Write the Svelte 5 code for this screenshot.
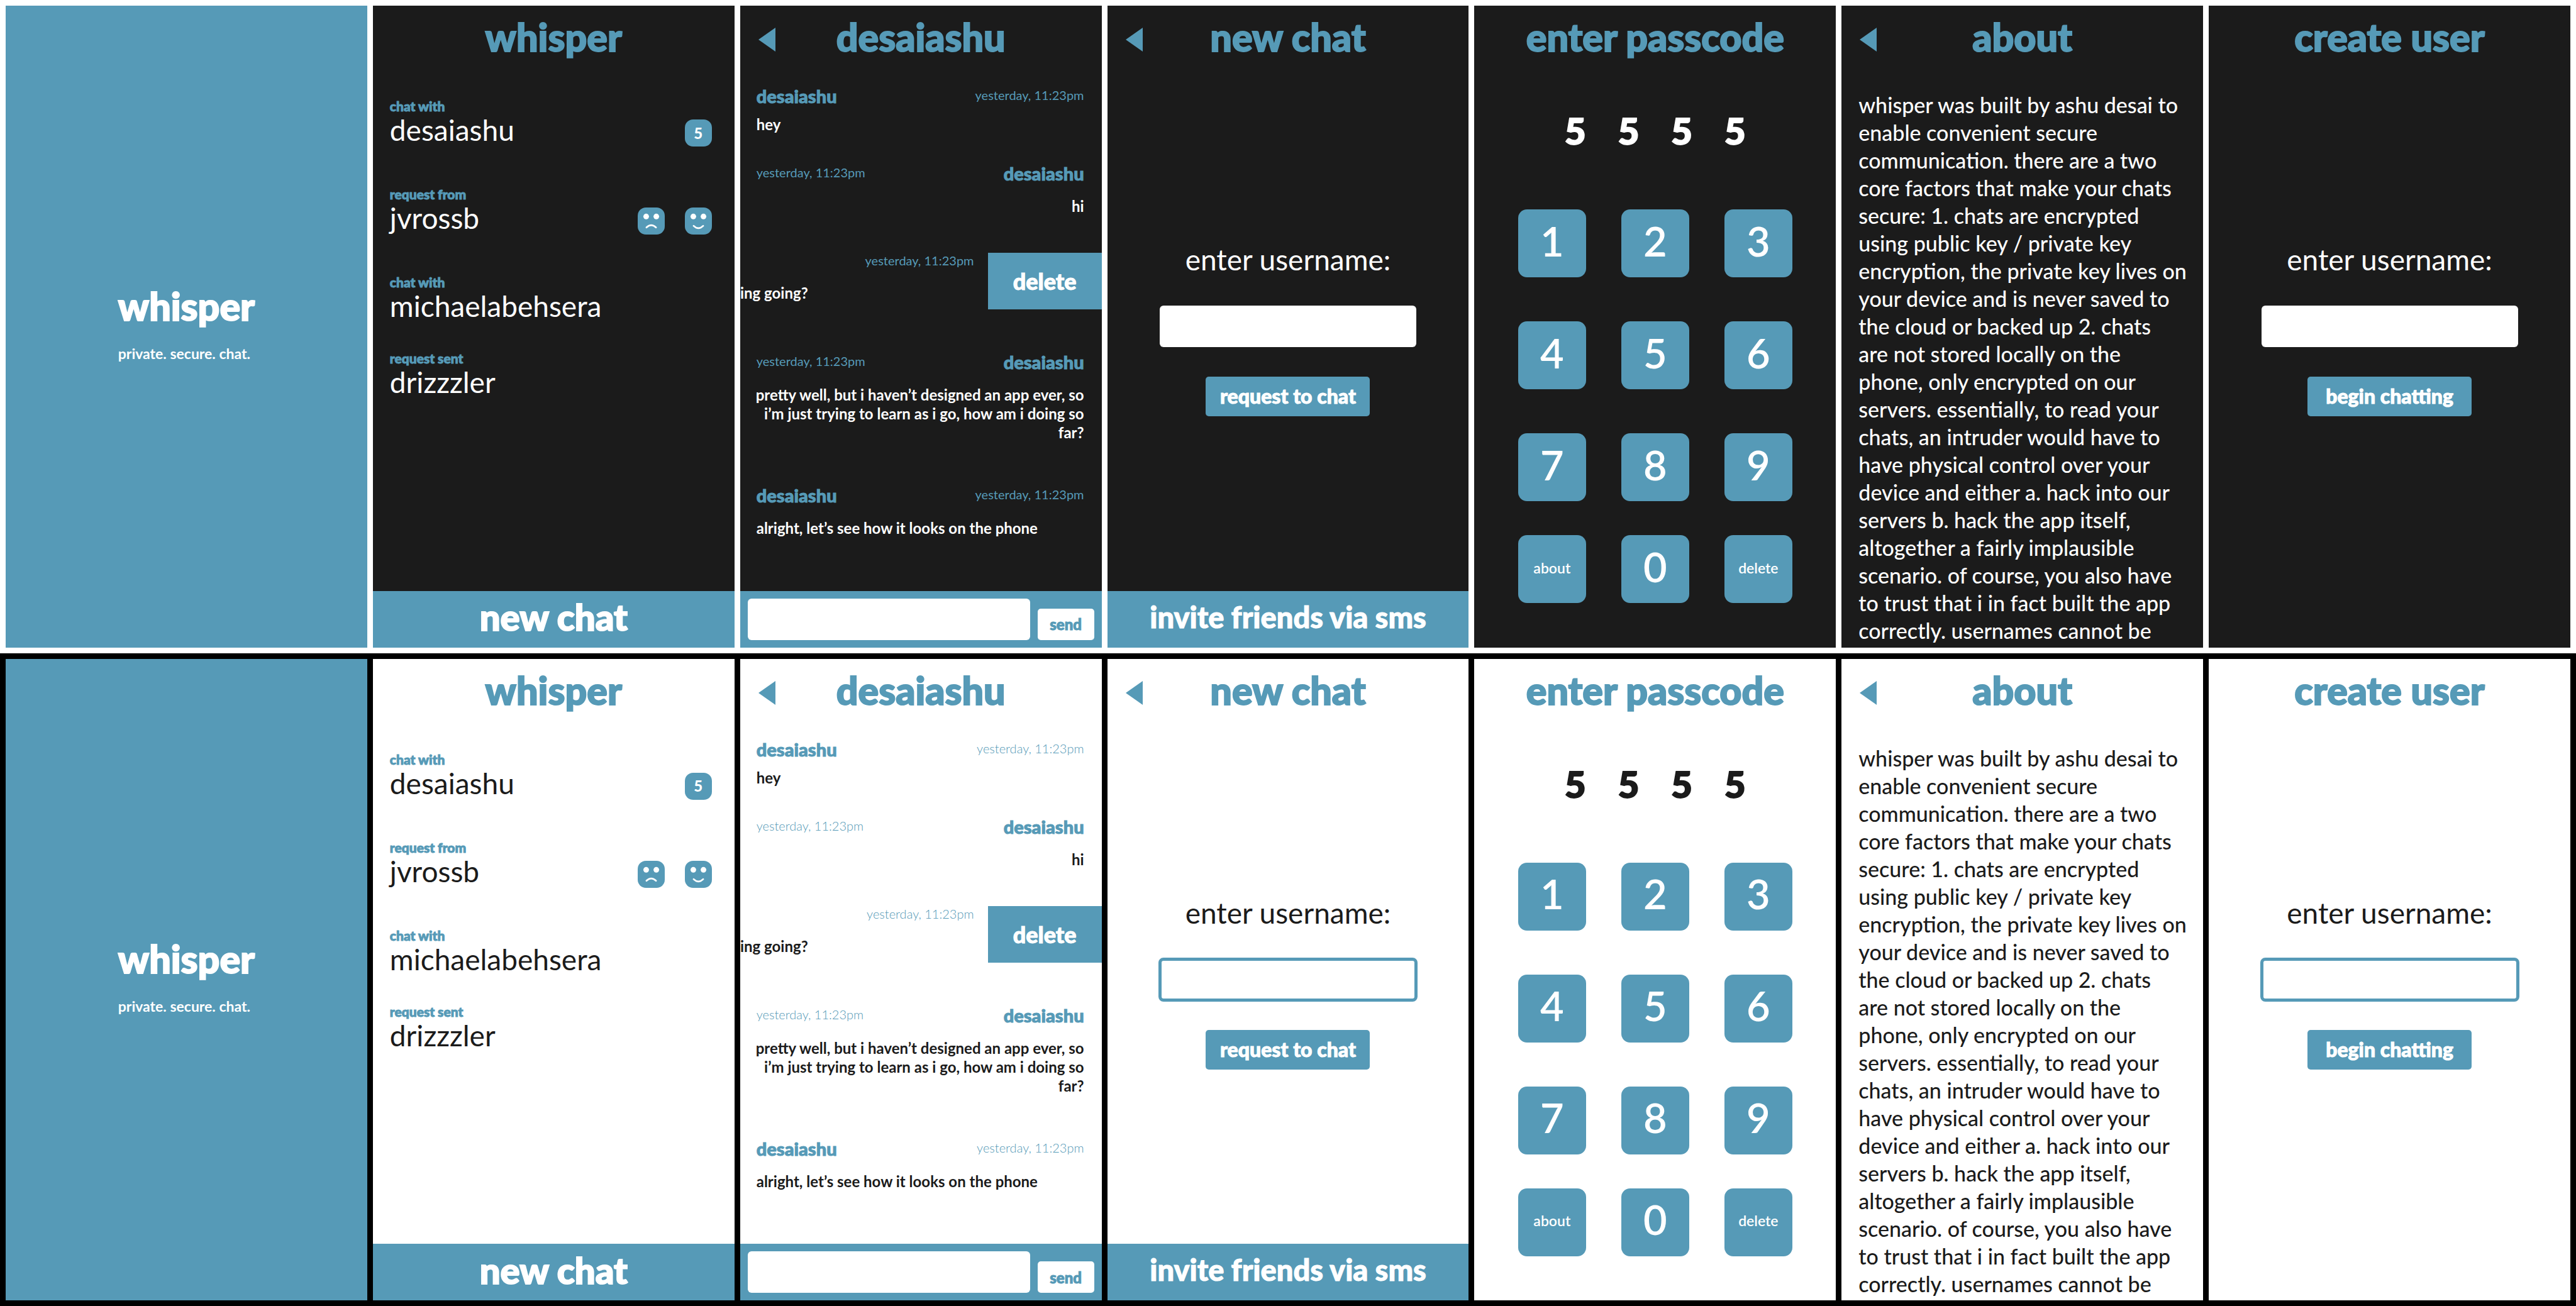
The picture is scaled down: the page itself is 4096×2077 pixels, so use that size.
<script>
  const themes = ['dark', 'light'];

  const chats = [
    { label: 'chat with', name: 'desaiashu', unread: 5 },
    { label: 'request from', name: 'jvrossb', request: true },
    { label: 'chat with', name: 'michaelabehsera' },
    { label: 'request sent', name: 'drizzzler' }
  ];

  const sent = 'yesterday, 11:23pm';

  const keys = ['1', '2', '3', '4', '5', '6', '7', '8', '9', 'about', '0', 'delete'];

  const about = [
    'whisper was built by ashu desai to',
    'enable convenient secure',
    'communication. there are a two',
    'core factors that make your chats',
    'secure: 1. chats are encrypted',
    'using public key / private key',
    'encryption, the private key lives on',
    'your device and is never saved to',
    'the cloud or backed up 2. chats',
    'are not stored locally on the',
    'phone, only encrypted on our',
    'servers. essentially, to read your',
    'chats, an intruder would have to',
    'have physical control over your',
    'device and either a. hack into our',
    'servers b. hack the app itself,',
    'altogether a fairly implausible',
    'scenario. of course, you also have',
    'to trust that i in fact built the app',
    'correctly. usernames cannot be'
  ].join('\n');
</script>

{#snippet header(title, back)}
  <header class="header">
    {#if back}
      <button class="back" aria-label="back">
        <svg viewBox="0 0 27 38" width="27" height="38"><path d="M0 19 27 0V38Z" fill="currentColor" /></svg>
      </button>
    {/if}
    <h2 class="title">{title}</h2>
  </header>
{/snippet}

{#snippet face(happy)}
  <button class="badge" aria-label={happy ? 'accept' : 'decline'}>
    <svg viewBox="0 0 48 48" width="43" height="43" fill="none" stroke="#fff" stroke-width="3" stroke-linecap="round">
      <circle cx="15" cy="16" r="5" fill="#fff" stroke="none" />
      <circle cx="33" cy="16" r="5" fill="#fff" stroke="none" />
      {#if happy}
        <path d="M15.5 32.5Q24 41 32.5 32.5" />
      {:else}
        <path d="M15.5 35.5Q24 27 32.5 35.5" />
      {/if}
    </svg>
  </button>
{/snippet}

{#snippet message(mine, text, spacing)}
  <article class="message {spacing}" class:mine>
    <div class="meta">
      <span class="author">desaiashu</span>
      <time class="time">{sent}</time>
    </div>
    <p class="body">{text}</p>
  </article>
{/snippet}

{#snippet usernameForm(id, action)}
  <form class="form" onsubmit={(e) => e.preventDefault()}>
    <label class="prompt" for={id}>enter username:</label>
    <input class="field" {id} type="text" />
    <button class="submit">{action}</button>
  </form>
{/snippet}

<main class="board">
  {#each themes as theme}
    <section class="row {theme}">
      <div class="screen splash">
        <div class="brand">
          <h1 class="logo">whisper</h1>
          <p class="tagline">private. secure. chat.</p>
        </div>
      </div>

      <div class="screen">
        {@render header('whisper', false)}
        <ul class="chats">
          {#each chats as chat}
            <li class="chat" class:active={chat.unread || chat.request}>
              <span class="label">{chat.label}</span>
              <div class="line">
                <span class="name">{chat.name}</span>
                {#if chat.unread}<span class="badge count">{chat.unread}</span>{/if}
                {#if chat.request}
                  {@render face(false)}
                  {@render face(true)}
                {/if}
              </div>
            </li>
          {/each}
        </ul>
        <button class="bar big">new chat</button>
      </div>

      <div class="screen">
        {@render header('desaiashu', true)}
        <div class="thread">
          {@render message(false, 'hey', 'tight')}
          {@render message(true, 'hi', 'medium')}
          <article class="swiped">
            <div class="slid">
              <time class="time">{sent}</time>
              <p class="body cut">ing going?</p>
            </div>
            <button class="remove">delete</button>
          </article>
          {@render message(true, 'pretty well, but i haven’t designed an app ever, so\ni’m just trying to learn as i go, how am i doing so\nfar?', 'loose')}
          {@render message(false, 'alright, let’s see how it looks on the phone', 'last')}
        </div>
        <form class="bar compose" onsubmit={(e) => e.preventDefault()}>
          <input class="draft" type="text" aria-label="message" />
          <button class="send">send</button>
        </form>
      </div>

      <div class="screen">
        {@render header('new chat', true)}
        {@render usernameForm(`invite-${theme}`, 'request to chat')}
        <button class="bar">invite friends via sms</button>
      </div>

      <div class="screen">
        {@render header('enter passcode', false)}
        <output class="code">
          {#each [5, 5, 5, 5] as digit}<span>{digit}</span>{/each}
        </output>
        <div class="pad">
          {#each keys as key}
            <button class="key" class:word={key.length > 1}>{key}</button>
          {/each}
        </div>
      </div>

      <div class="screen">
        {@render header('about', true)}
        <p class="about">{about}</p>
      </div>

      <div class="screen">
        {@render header('create user', false)}
        {@render usernameForm(`create-${theme}`, 'begin chatting')}
      </div>
    </section>
  {/each}
</main>

<style>
  :global(body) {
    margin: 0;
  }

  .board {
    --blue: #569ab7;
    display: grid;
    grid-auto-rows: 1fr;
    min-height: 100vh;
    font-family: Lato, 'Open Sans', sans-serif;
  }

  .board *,
  .board {
    box-sizing: border-box;
  }

  h1,
  h2,
  p,
  ul {
    margin: 0;
    padding: 0;
  }

  button,
  input {
    margin: 0;
    padding: 0;
    border: 0;
    font: inherit;
    color: inherit;
    background: none;
  }

  .row {
    display: grid;
    grid-template-columns: repeat(7, minmax(0, 1fr));
    gap: 9px;
    padding: 9px;
  }

  .dark {
    --page: #1b1b1b;
    --ink: #fff;
    --time-weight: 400;
    background: #fff;
  }

  .light {
    --page: #fff;
    --ink: #1b1b1b;
    --time-weight: 300;
    background: #000;
  }

  .screen {
    display: flex;
    flex-direction: column;
    overflow: hidden;
    background: var(--page);
    color: var(--ink);
  }

  .splash {
    align-items: center;
    justify-content: center;
    background: var(--blue);
    color: #fff;
  }

  .brand {
    padding-bottom: 20px;
  }

  .logo,
  .title {
    font-size: 61px;
    line-height: 92px;
    font-weight: 900;
    -webkit-text-stroke: 2px;
  }

  .tagline {
    font-size: 23px;
    line-height: 32px;
    font-weight: 700;
    padding-top: 13px;
  }

  .header {
    display: grid;
    grid-template-columns: 60px 1fr 60px;
    align-items: center;
    height: 92px;
    flex: none;
    color: var(--blue);
  }

  .back {
    display: flex;
    grid-row: 1;
    grid-column: 1;
    justify-content: flex-end;
    padding: 12px 4px 0 0;
  }

  .title {
    grid-row: 1;
    grid-column: 2;
    padding-top: 4px;
    text-align: center;
    white-space: nowrap;
  }

  .chats {
    display: flex;
    flex-direction: column;
    flex: 1;
    gap: 45px;
    padding: 56px 36px 0 27px;
    list-style: none;
  }

  .active {
    padding-bottom: 19px;
  }

  .label {
    display: block;
    font-size: 21px;
    line-height: 24px;
    font-weight: 900;
    -webkit-text-stroke: 1px;
    color: var(--blue);
  }

  .line {
    display: flex;
    align-items: flex-end;
    gap: 32px;
  }

  .name {
    flex: 1;
    font-size: 46px;
    line-height: 52px;
  }

  .badge {
    display: flex;
    align-items: center;
    justify-content: center;
    width: 43px;
    height: 43px;
    border-radius: 13px;
    background: var(--blue);
    color: #fff;
  }

  .count {
    font-size: 24px;
    line-height: 32px;
    font-weight: 900;
  }

  .bar {
    flex: none;
    height: 90px;
    padding-bottom: 8px;
    background: var(--blue);
    color: #fff;
    font-size: 47px;
    font-weight: 900;
    -webkit-text-stroke: 1px;
  }

  .big {
    font-size: 58px;
    -webkit-text-stroke: 2px;
  }

  .thread {
    flex: 1;
    padding-top: 38px;
  }

  .message {
    display: flex;
    flex-direction: column;
    gap: 23px;
    padding: 0 28px 0 26px;
  }

  .tight {
    gap: 16px;
    padding-bottom: 49px;
  }

  .medium {
    padding-bottom: 59px;
  }

  .loose {
    padding-bottom: 71px;
  }

  .meta {
    display: flex;
    justify-content: space-between;
  }

  .mine .meta {
    flex-direction: row-reverse;
  }

  .author {
    font-size: 29px;
    line-height: 28px;
    font-weight: 900;
    -webkit-text-stroke: 1px;
    color: var(--blue);
  }

  .time {
    font-size: 20px;
    line-height: 24px;
    font-weight: var(--time-weight);
    color: var(--blue);
  }

  .body {
    font-size: 24px;
    line-height: 30px;
    font-weight: 700;
    white-space: pre;
  }

  .mine .body {
    align-self: flex-end;
    text-align: right;
  }

  .swiped {
    display: flex;
    height: 90px;
    margin-bottom: 70px;
  }

  .slid {
    display: flex;
    flex: 1;
    flex-direction: column;
    align-items: flex-end;
    gap: 25px;
    padding-right: 22px;
  }

  .cut {
    display: flex;
    align-self: flex-start;
    justify-content: flex-end;
    width: 108px;
  }

  .remove {
    width: 181px;
    background: var(--blue);
    color: #fff;
    font-size: 36px;
    font-weight: 900;
    -webkit-text-stroke: 1px;
  }

  .compose {
    display: flex;
    align-items: flex-end;
    gap: 12px;
    padding: 12px;
  }

  .draft {
    flex: 1;
    min-width: 0;
    height: 66px;
    padding: 0 16px;
    border-radius: 6px;
    background: #fff;
    color: #1b1b1b;
    font-size: 24px;
  }

  .send {
    width: 90px;
    height: 50px;
    border-radius: 5px;
    background: #fff;
    color: var(--blue);
    font-size: 24px;
    font-weight: 900;
  }

  .form {
    display: flex;
    flex: 1;
    flex-direction: column;
    align-items: center;
    padding-top: 286px;
  }

  .prompt {
    font-size: 46px;
    line-height: 52px;
  }

  .field {
    width: 71%;
    height: 66px;
    margin: 47px 0;
    padding: 0 16px;
    border-radius: 6px;
    background: #fff;
    color: #1b1b1b;
    font-size: 36px;
  }

  .light .field {
    outline: 5px solid var(--blue);
    outline-offset: -3px;
  }

  .submit {
    width: 261px;
    height: 63px;
    padding-bottom: 2px;
    border-radius: 5px;
    background: var(--blue);
    color: #fff;
    font-size: 32px;
    font-weight: 900;
    -webkit-text-stroke: 1px;
  }

  .code {
    display: flex;
    justify-content: center;
    gap: 51px;
    padding-top: 67px;
    font-size: 58px;
    line-height: 80px;
    font-weight: 900;
    -webkit-text-stroke: 2px;
  }

  .pad {
    display: grid;
    grid-template-columns: repeat(3, 108px);
    grid-template-rows: 178px 178px 162px 108px;
    justify-content: center;
    column-gap: 56px;
    padding-top: 85px;
  }

  .key {
    height: 108px;
    padding-bottom: 9px;
    border-radius: 14px;
    background: var(--blue);
    color: #fff;
    font-size: 65px;
    font-weight: 600;
  }

  .word {
    padding-bottom: 5px;
    font-size: 23px;
  }

  .about {
    padding: 44px 27px 0;
    font-size: 34px;
    line-height: 44px;
    font-weight: 500;
    white-space: pre;
  }
</style>
